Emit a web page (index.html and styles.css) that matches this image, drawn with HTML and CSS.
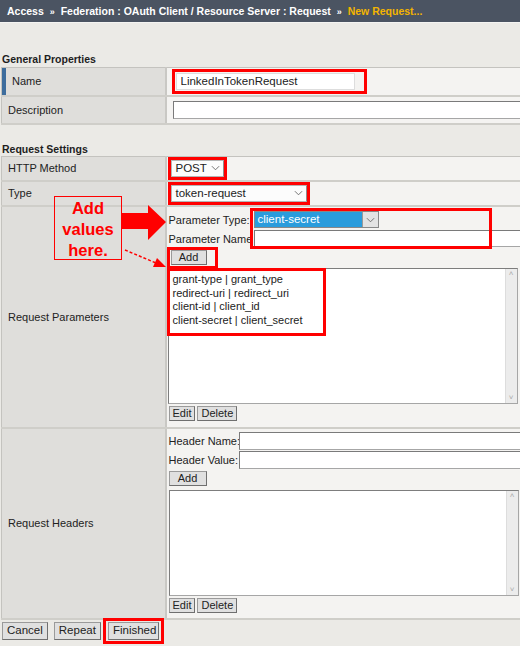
FILE: index.html
```html
<!DOCTYPE html>
<html lang="en">
<head>
  <meta charset="UTF-8">
  <title>New Request</title>
  <link rel="stylesheet" href="styles.css">
</head>
<body>

  <!-- Breadcrumb -->
  <div class="crumbs">
    Access <span class="sep">&raquo;</span> Federation : OAuth Client / Resource Server : Request
    <span class="sep">&raquo;</span> <span class="cur">New Request...</span>
  </div>
  <div class="band"></div>

  <!-- General Properties -->
  <h2 class="sect">General Properties</h2>
  <table class="props">
    <colgroup><col class="col-label"><col class="col-value"></colgroup>
    <tr class="row-name sel">
      <th>Name</th>
      <td><span class="mark mark-name"><input class="field name-field" type="text" value="LinkedInTokenRequest"></span></td>
    </tr>
    <tr class="row-name">
      <th>Description</th>
      <td><input class="field desc-field" type="text"></td>
    </tr>
  </table>

  <!-- Request Settings -->
  <h2 class="sect sect-2">Request Settings</h2>
  <table class="props">
    <colgroup><col class="col-label"><col class="col-value"></colgroup>
    <tr class="row-method">
      <th>HTTP Method</th>
      <td><span class="mark"><span class="select sel-post">POST <svg class="chev" viewBox="0 0 10 6"><path d="M1 1l4 4 4-4"/></svg></span></span></td>
    </tr>
    <tr class="row-type">
      <th>Type</th>
      <td><span class="mark"><span class="select sel-type">token-request <svg class="chev" viewBox="0 0 10 6"><path d="M1 1l4 4 4-4"/></svg></span></span></td>
    </tr>
    <tr class="row-params">
      <th>Request Parameters</th>
      <td>
        <div class="panel">
          <div class="line">
            <label class="lbl-param">Parameter Type:</label>
            <span class="select sel-ptype"><span class="picked">client-secret</span><span class="drop"><svg class="chev" viewBox="0 0 10 6"><path d="M1 1l4 4 4-4"/></svg></span></span>
          </div>
          <div class="line">
            <label class="lbl-param">Parameter Name</label>
            <input class="field pname-field" type="text">
          </div>
          <div class="line">
            <span class="mark mark-add"><button class="btn">Add</button></span>
          </div>
          <div class="listbox list-params">
            <div class="items">
              <div>grant-type | grant_type</div>
              <div>redirect-uri | redirect_uri</div>
              <div>client-id | client_id</div>
              <div>client-secret | client_secret</div>
            </div>
            <div class="scroll"><span>&#708;</span><span>&#709;</span></div>
          </div>
          <div class="line actions">
            <button class="btn">Edit</button><button class="btn">Delete</button>
          </div>
          <div class="box-param"></div>
        </div>
      </td>
    </tr>
    <tr class="row-headers">
      <th>Request Headers</th>
      <td>
        <div class="panel">
          <div class="line">
            <label class="lbl-head">Header Name:</label>
            <input class="field head-field" type="text">
          </div>
          <div class="line">
            <label class="lbl-head">Header Value:</label>
            <input class="field head-field" type="text">
          </div>
          <div class="line">
            <button class="btn btn-add2">Add</button>
          </div>
          <div class="listbox list-headers">
            <div class="items"></div>
            <div class="scroll"><span>&#708;</span><span>&#709;</span></div>
          </div>
          <div class="line actions">
            <button class="btn">Edit</button><button class="btn">Delete</button>
          </div>
        </div>
      </td>
    </tr>
  </table>

  <!-- Bottom buttons -->
  <div class="footer">
    <button class="btn big">Cancel</button>
    <button class="btn big">Repeat</button>
    <span class="mark mark-fin"><button class="btn big">Finished</button></span>
  </div>

  <!-- Callout -->
  <div class="callout">Add values here.</div>
  <svg class="arrows" width="60" height="80" viewBox="0 0 60 80">
    <path class="big-arrow" d="M0 17 H26 V9 L44 26 L26 44 V33 H0 Z"/>
    <path class="dash" d="M3 54 L34 67" />
    <path class="dash-head" d="M44 71 L31 71 L35 62 Z"/>
  </svg>

</body>
</html>
```

FILE: styles.css
```css
/* Base */
body {
  margin: 0;
  width: 520px;
  height: 646px;
  overflow: hidden;
  position: relative;
  background-color: #ebeae6;
  font-family: "Liberation Sans", Arial, sans-serif;
  font-size: 11px;
  color: #222;
}

/* Breadcrumb */
.crumbs {
  height: 22px;
  line-height: 22px;
  padding-left: 7px;
  background-color: #4b5462;
  color: #fff;
  font-weight: bold;
  font-size: 10.5px;
  white-space: nowrap;
  border-bottom: 1px solid #f4f4f2;
}

.crumbs .sep {
  font-size: 9px;
  margin: 0 3px;
}

.crumbs .cur {
  color: #f3b400;
}

.band {
  height: 27px;
}

/* Section headings */
.sect {
  margin: 0;
  padding: 3px 2px 0;
  height: 14px;
  font-size: 10.5px;
  font-weight: bold;
  color: #1e1e1e;
}

.sect-2 {
  margin-top: 15px;
  height: 13px;
}

/* Property tables */
.props {
  border-collapse: collapse;
  table-layout: fixed;
  margin-left: 1px;
  width: 560px;
  border-top: 1px solid #c4c3bf;
}

.col-label { width: 164px; }
.col-value { width: 396px; }

.props th {
  padding: 0 0 0 6px;
  text-align: left;
  font-weight: normal;
  background-color: #dfdedb;
  border-left: 1px solid #c4c3bf;
  border-right: 2px solid #c9c8c4;
  border-bottom: 2px solid #cfcec9;
  vertical-align: middle;
}

.props td {
  padding: 0 0 0 1px;
  background-color: #f4f3f1;
  border-bottom: 2px solid #cfcec9;
  vertical-align: middle;
  white-space: nowrap;
}

.props tr.sel th {
  box-shadow: inset 4px 0 #3e6d9d;
  padding-left: 10px;
}

.row-name { height: 28px; }
.row-method { height: 24px; }
.row-type { height: 25px; }
.row-params { height: 222px; }
.row-headers { height: 191px; }

/* Red annotation marks */
.mark {
  display: inline-block;
  border: 3px solid #f00;
  padding: 0;
  line-height: 0;
}

.mark-name {
  margin-left: 4px;
  padding: 1px 9px 1px 1px;
}

/* Inputs */
.field {
  box-sizing: border-box;
  height: 18px;
  border: 1px solid #a6a6a6;
  border-top-color: #7a7a7a;
  border-left-color: #7a7a7a;
  background: #fff;
  font: 11px "Liberation Sans", Arial, sans-serif;
  padding: 0 4px;
  color: #222;
}

.name-field {
  width: 179px;
  height: 17px;
  border: 1px solid #ddd;
  background: #fff;
  font-size: 11.5px;
}

.desc-field {
  width: 400px;
  margin-left: 5px;
}

.pname-field {
  width: 300px;
  height: 17px;
}

.head-field {
  width: 300px;
  height: 18px;
}

/* Fake selects */
.select {
  display: inline-flex;
  align-items: center;
  justify-content: space-between;
  box-sizing: border-box;
  height: 17px;
  padding: 0 3px 0 4px;
  background: #fcfcfc;
  border: 1px solid #b5b5b5;
  border-right-color: #8e8e8e;
  font-size: 11.5px;
  line-height: 15px;
  color: #222;
}

.chev {
  width: 9px;
  height: 6px;
  fill: none;
  stroke: #666;
  stroke-width: 1;
}

.sel-post { width: 53px; }
.sel-type { width: 136px; }

.sel-ptype {
  width: 125px;
  padding: 0;
  border-color: #888;
  background: #2a9cdc;
}

.sel-ptype .picked {
  flex: 1;
  color: #fff;
  padding-left: 3px;
}

.sel-ptype .drop {
  width: 15px;
  height: 15px;
  display: flex;
  align-items: center;
  justify-content: center;
  background: #e3e3e3;
  border-left: 1px solid #999;
}

/* Panels inside cells */
.panel {
  position: relative;
}

.line {
  display: flex;
  align-items: center;
  height: 19px;
  white-space: nowrap;
}

.lbl-param {
  width: 85px;
  padding-left: 1px;
}

.lbl-head {
  width: 70px;
  padding-left: 1px;
}

/* Buttons */
.btn {
  box-sizing: border-box;
  height: 15px;
  padding: 0 3px;
  background: #e0e0e0;
  border: 1px solid #9a9a9a;
  border-right-color: #6f6f6f;
  border-bottom-color: #6f6f6f;
  font: 11px "Liberation Sans", Arial, sans-serif;
  color: #222;
  line-height: 13px;
  margin: 0 2px 0 0;
}

.mark-add {
  padding: 0 6px 1px 0;
  margin-left: -1px;
}

.mark-add .btn {
  width: 36px;
  margin-left: 1px;
}

.btn-add2 {
  width: 38px;
  margin-left: 1px;
}

.actions .btn:first-child {
  margin-left: 1px;
}

/* List boxes */
.listbox {
  display: flex;
  box-sizing: border-box;
  width: 350px;
  background: #fff;
  border: 1px solid #a6a6a6;
  border-top-color: #7d7d7d;
  border-left-color: #7d7d7d;
}

.list-params {
  height: 136px;
  margin-top: 1px;
}

.list-headers {
  height: 106px;
  margin-top: 2px;
  margin-left: 1px;
}

.listbox .items {
  flex: 1;
}

.list-params .items {
  flex: none;
  width: 150px;
  height: 60px;
  margin: -1px 0 0 -2px;
  padding: 2px 0 0 3px;
  border: 3px solid #f00;
  line-height: 13.5px;
  align-self: flex-start;
}

.list-params .scroll {
  margin-left: auto;
}

.scroll {
  width: 11px;
  background: #ececec;
  border-left: 1px solid #ddd;
  display: flex;
  flex-direction: column;
  justify-content: space-between;
  align-items: center;
  color: #aaa;
  font-size: 8px;
  line-height: 10px;
}

/* Box around parameter type/name */
.box-param {
  position: absolute;
  left: 82px;
  top: -2px;
  width: 236px;
  height: 35px;
  border: 3px solid #f00;
}

/* Footer */
.footer {
  display: flex;
  align-items: center;
  height: 24px;
  margin-top: -1px;
  padding-left: 2px;
}

.btn.big {
  height: 18px;
  font-size: 11.5px;
  padding: 0 4px;
  margin-right: 6px;
}

.mark-fin {
  margin-left: -4px;
  padding: 1px 2px;
}

.mark-fin .btn.big {
  margin: 0;
  width: 51px;
}

/* Callout */
.callout {
  position: absolute;
  left: 54px;
  top: 196px;
  width: 68px;
  height: 64px;
  box-sizing: border-box;
  padding-top: 1px;
  border: 1px solid #f00;
  color: #f00;
  font-weight: bold;
  font-size: 16.5px;
  line-height: 21px;
  text-align: center;
}

.arrows {
  position: absolute;
  left: 122px;
  top: 196px;
}

.big-arrow {
  fill: #f00;
}

.dash {
  stroke: #f00;
  stroke-width: 1.5;
  stroke-dasharray: 3 2;
  fill: none;
}

.dash-head {
  fill: #f00;
}
```
